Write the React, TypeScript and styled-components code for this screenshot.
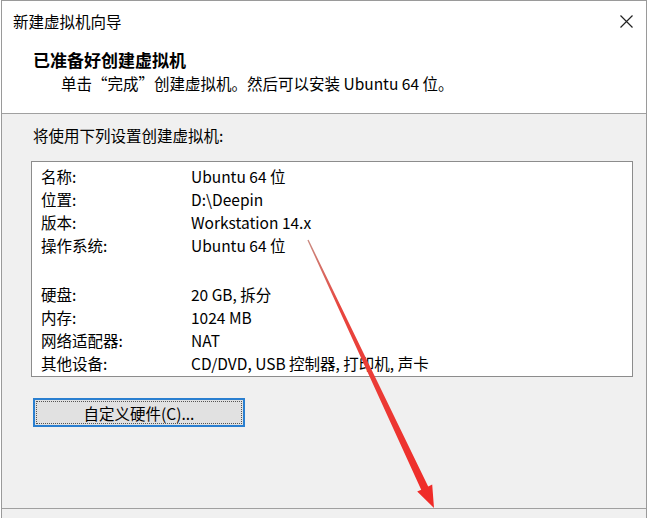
import styled, { createGlobalStyle } from 'styled-components';

const GlobalStyle = createGlobalStyle`
  html, body {
    margin: 0;
    padding: 0;
    background: #ffffff;
  }
  body {
    font-family: "Noto Sans CJK SC", "Noto Sans", sans-serif;
    color: #000;
  }
`;

type Setting = { label: string; value: string } | null;

const settings: Setting[] = [
  { label: '名称:', value: 'Ubuntu 64 位' },
  { label: '位置:', value: 'D:\\Deepin' },
  { label: '版本:', value: 'Workstation 14.x' },
  { label: '操作系统:', value: 'Ubuntu 64 位' },
  null,
  { label: '硬盘:', value: '20 GB, 拆分' },
  { label: '内存:', value: '1024 MB' },
  { label: '网络适配器:', value: 'NAT' },
  { label: '其他设备:', value: 'CD/DVD, USB 控制器, 打印机, 声卡' },
];

const Wizard = () => (
  <Window>
    <TitleBar>
      <Title>新建虚拟机向导</Title>
      <CloseButton aria-label='close'>
        <svg width='13' height='13' viewBox='0 0 13 13'>
          <path d='M0.5 0.5 L12.5 12.5 M12.5 0.5 L0.5 12.5' stroke='#222' strokeWidth='1.2' />
        </svg>
      </CloseButton>
    </TitleBar>

    <Header>
      <Heading>已准备好创建虚拟机</Heading>
      <SubHeading>单击“完成”创建虚拟机。然后可以安装 Ubuntu 64 位。</SubHeading>
    </Header>

    <Body>
      <Intro>将使用下列设置创建虚拟机:</Intro>
      <SettingsBox>
        {settings.map((s, i) =>
          s ? (
            <Row key={i}>
              <Label>{s.label}</Label>
              <Value>{s.value}</Value>
            </Row>
          ) : (
            <Spacer key={i} />
          )
        )}
      </SettingsBox>
      <HardwareButton>
        <FocusRing>自定义硬件(C)...</FocusRing>
      </HardwareButton>
    </Body>

    <Footer />

    {/* red pointer drawn over the dialog */}
    <Arrow viewBox='0 0 650 518' width='650' height='518'>
      <defs>
        <linearGradient id='shaft' x1='306' y1='240' x2='433' y2='508' gradientUnits='userSpaceOnUse'>
          <stop offset='0' stopColor='#c98a80' />
          <stop offset='0.25' stopColor='#e8463f' />
          <stop offset='1' stopColor='#f02a27' />
        </linearGradient>
      </defs>
      <polygon
        points='306.4,240.2 307.6,239.8 427.2,486.4 431.2,484.5 433,508 416.2,491.6 420.2,489.8'
        fill='url(#shaft)'
      />
    </Arrow>
  </Window>
);

export default function App() {
  return (
    <>
      <GlobalStyle />
      <Wizard />
    </>
  );
}

const Window = styled.div`
  position: relative;
  box-sizing: border-box;
  width: 646px;
  height: 518px;
  margin-left: 1px;
  padding-top: 1px;
  border: 1px solid #9a9a9a;
  border-top: none;
  border-bottom: none;
  display: flex;
  flex-direction: column;
  background: #f0f0f0;
  overflow: hidden;

  &::before {
    content: '';
    position: absolute;
    top: 0;
    left: 0;
    right: 0;
    height: 1px;
    background: #9a9a9a;
  }
`;

const TitleBar = styled.div`
  height: 40px;
  display: flex;
  align-items: center;
  justify-content: space-between;
  padding: 0 12px 0 11px;
  background: #fff;
`;

const Title = styled.span`
  font-size: 15.5px;
  line-height: 20px;
`;

const CloseButton = styled.div`
  display: flex;
  align-items: center;
  justify-content: center;
  width: 13px;
  height: 13px;
  margin-right: 1px;
`;

const Header = styled.div`
  height: 73px;
  box-sizing: border-box;
  padding: 7px 0 0 31px;
  background: #fff;
  border-bottom: 1px solid #a0a0a0;
`;

const Heading = styled.div`
  font-size: 17px;
  font-weight: 700;
  line-height: 24px;
`;

const SubHeading = styled.div`
  font-size: 15.5px;
  line-height: 23px;
  padding-left: 28px;
`;

const Body = styled.div`
  flex: 1;
  padding: 10px 13px 0 29px;
  display: flex;
  flex-direction: column;
  align-items: flex-start;
  border-bottom: 1px solid #a0a0a0;
`;

const Intro = styled.div`
  font-size: 15.5px;
  line-height: 22px;
  padding-left: 2px;
`;

const SettingsBox = styled.div`
  margin-top: 15px;
  box-sizing: border-box;
  align-self: stretch;
  height: 216px;
  padding: 3px 0 0 9px;
  background: #fff;
  border: 1px solid #8c8c8c;
`;

const Row = styled.div`
  display: grid;
  grid-template-columns: 150px 1fr;
  font-size: 15.5px;
  line-height: 23px;
`;

const Label = styled.span``;

const Value = styled.span``;

const Spacer = styled.div`
  height: 26px;
`;

const HardwareButton = styled.button`
  margin: 21px 0 0 2px;
  box-sizing: border-box;
  width: 212px;
  height: 29px;
  padding: 1px;
  background: #e1e1e1;
  border: 2px solid #2a7fd0;
  font-family: inherit;
  font-size: 15.5px;
  color: #000;
  display: flex;
`;

const FocusRing = styled.span`
  flex: 1;
  display: flex;
  align-items: center;
  justify-content: center;
  border: 1px dotted #555;
  line-height: 20px;
`;

const Footer = styled.div`
  height: 9px;
  background: #f0f0f0;
`;

const Arrow = styled.svg`
  position: absolute;
  top: 0;
  left: -1px;
  pointer-events: none;
`;
